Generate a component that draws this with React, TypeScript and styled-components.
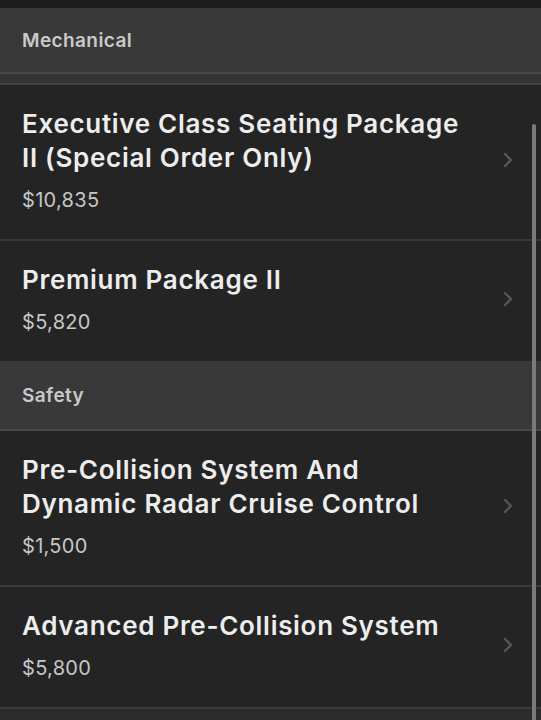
import React from 'react'
import styled, { createGlobalStyle } from 'styled-components'

const GlobalStyle = createGlobalStyle`
  html, body {
    margin: 0;
    padding: 0;
    background: #2c2c2c;
  }
  body {
    font-family: Inter, "Noto Sans", "Liberation Sans", sans-serif;
    -webkit-font-smoothing: antialiased;
  }
`

const Screen = styled.div`
  position: relative;
  width: 541px;
  height: 720px;
  overflow: hidden;
  background: #2c2c2c;
`

const TopBar = styled.div`
  height: 8px;
  background: #1d1d1d;
`

const SectionHeader = styled.div<{ $height: number }>`
  height: ${(props) => props.$height}px;
  display: flex;
  align-items: center;
  padding-left: 22px;
  background: #393939;
  border-bottom: 2px solid #484848;
  color: #c9c9c9;
  font-size: 19px;
  font-weight: 600;
  letter-spacing: 0.4px;
  box-sizing: border-box;
`

const Strip = styled.div`
  height: 11px;
  background: #343434;
  border-bottom: 2px solid #424242;
  box-sizing: border-box;
`

const Row = styled.div<{ $divider: boolean }>`
  display: flex;
  align-items: center;
  background: #242424;
  border-bottom: ${(props) => (props.$divider ? '2px solid #3a3a3a' : 'none')};
  padding: 22px 0 26px 22px;
`

const RowText = styled.div`
  flex: 1;
  max-width: 442px;
`

const Title = styled.div`
  color: #ededed;
  font-size: 26px;
  font-weight: 600;
  line-height: 34px;
  letter-spacing: 0.7px;
`

const Price = styled.div`
  margin-top: 12px;
  color: #c6c6c6;
  font-size: 20px;
  font-weight: 400;
  line-height: 26px;
  letter-spacing: 0.3px;
`

const Chevron = styled.svg`
  margin-left: auto;
  margin-right: 28px;
  flex-shrink: 0;
`

const Scrollbar = styled.div`
  position: absolute;
  left: 532px;
  top: 124px;
  width: 4px;
  height: 620px;
  border-radius: 2px;
  background: #7a7a7a;
`

type Item = { title: string; price: string }

const mechanical: Item[] = [
  { title: 'Executive Class Seating Package II (Special Order Only)', price: '$10,835' },
  { title: 'Premium Package II', price: '$5,820' },
]

const safety: Item[] = [
  { title: 'Pre-Collision System And Dynamic Radar Cruise Control', price: '$1,500' },
  { title: 'Advanced Pre-Collision System', price: '$5,800' },
]

function OptionRow({ item, divider }: { item: Item; divider: boolean }) {
  return (
    <Row $divider={divider}>
      <RowText>
        <Title>{item.title}</Title>
        <Price>{item.price}</Price>
      </RowText>
      <Chevron width="10" height="16" viewBox="0 0 10 16">
        <path d="M2 2 L8 8 L2 14" fill="none" stroke="#565656" strokeWidth="2.4" strokeLinecap="round" strokeLinejoin="round" />
      </Chevron>
    </Row>
  )
}

export default function App() {
  return (
    <>
      <GlobalStyle />
      <Screen>
        <TopBar />
        <SectionHeader $height={66}>Mechanical</SectionHeader>
        <Strip />
        {mechanical.map((item, i) => (
          <OptionRow key={item.title} item={item} divider={i < mechanical.length - 1} />
        ))}
        <SectionHeader $height={70}>Safety</SectionHeader>
        {safety.map((item) => (
          <OptionRow key={item.title} item={item} divider />
        ))}
        <Scrollbar />
      </Screen>
    </>
  )
}
